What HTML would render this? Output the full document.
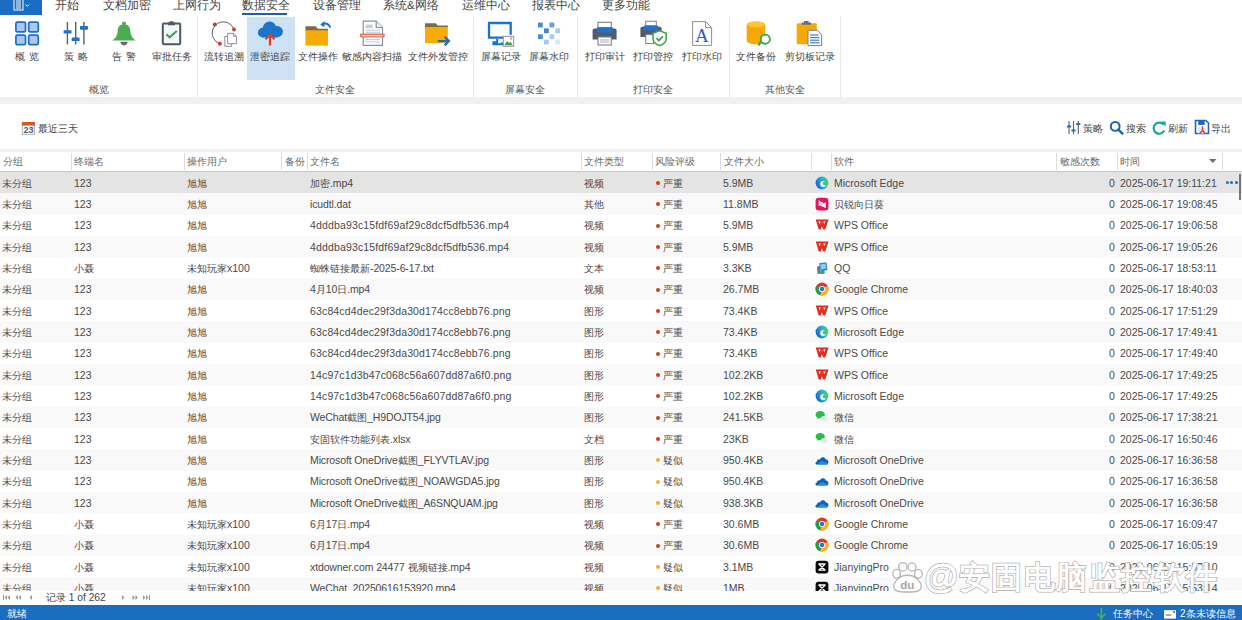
<!DOCTYPE html>
<html><head><meta charset="utf-8">
<style>
*{margin:0;padding:0;box-sizing:border-box}
html,body{width:1242px;height:620px;overflow:hidden;background:#fff;font-family:"Liberation Sans",sans-serif;color:#333;position:relative}
svg{display:block}
.a{position:absolute}
#appbtn{position:absolute;left:0;top:0;width:41.6px;height:14.6px;background:#1b6cc3}
.tab{position:absolute;top:-3px;font-size:11.5px;line-height:16px;color:#444;white-space:nowrap}
.sep{position:absolute;top:16px;width:1px;height:81px;background:#e6e6e6}
.lbl{position:absolute;top:51px;width:90px;margin-left:-45px;text-align:center;font-size:10.2px;line-height:12px;color:#444;white-space:nowrap}
.glbl{position:absolute;top:84px;width:90px;margin-left:-45px;text-align:center;font-size:10.2px;line-height:12px;color:#555;white-space:nowrap}
.ico{position:absolute}
#band{position:absolute;left:0;top:97px;width:1242px;height:7px;background:#f1f1f1}
#band2{position:absolute;left:0;top:149px;width:1242px;height:2.5px;background:#f1f1f1}
.tb{position:absolute;top:123px;font-size:10.4px;line-height:12px;color:#444;white-space:nowrap}
#hdr{position:absolute;left:0;top:151.5px;width:1242px;height:20.5px;background:#fff;border-bottom:1px solid #c9c9c9}
.h{position:absolute;top:4.3px;font-size:10.3px;line-height:12px;color:#6a6a6a;white-space:nowrap}
.hs{position:absolute;top:1.5px;width:1px;height:16.5px;background:#dcdcdc}
#grid{position:absolute;left:0;top:172px;width:1242px;height:419px;overflow:hidden}
.row{position:absolute;left:0;width:1242px;height:21.34px}
.c{position:absolute;top:0.7px;line-height:21.34px;font-size:10.5px;color:#4a4a4a;white-space:nowrap}
.fn{letter-spacing:.12px}
.k{font-size:9.6px;letter-spacing:0}
.dot{position:absolute;left:655.5px;top:9.1px;width:4px;height:4px;border-radius:50%}
.sw{position:absolute;left:814.5px;top:3.8px}
.more{position:absolute;left:1225.5px;top:9px}
.more i{display:inline-block;width:3.2px;height:3.2px;border-radius:50%;background:#1f6bc4;margin-right:1.6px;vertical-align:top}
#scroll{position:absolute;left:1239px;top:173.5px;width:1.6px;height:26px;background:#777}
#pager{position:absolute;left:0;top:591px;width:1242px;height:14px;background:#fff}
#status{position:absolute;left:0;top:605px;width:1242px;height:15px;background:#1b6dbf}
.st{position:absolute;top:3px;font-size:10px;line-height:12px;color:#fff;white-space:nowrap}
</style></head><body>
<!-- tab bar -->
<div id="appbtn"><svg width="42" height="14" viewBox="0 0 42 14"><rect x="14" y="-1" width="9" height="11" fill="none" stroke="#d9e7f7" stroke-width="1.2"/><rect x="16" y="0" width="5" height="9" fill="#8fb6e3"/><path d="M25.5 4.5 L27.3 6.3 L29.1 4.5" fill="none" stroke="#fff" stroke-width="1"/></svg></div>
<div class="tab" style="left:55px">开始</div>
<div class="tab" style="left:103px">文档加密</div>
<div class="tab" style="left:173px">上网行为</div>
<div class="tab" style="left:242px">数据安全</div>
<div class="a" style="left:242px;top:12.5px;width:45px;height:2px;background:#1d5fae"></div>
<div class="tab" style="left:313px">设备管理</div>
<div class="tab" style="left:383px">系统&amp;网络</div>
<div class="tab" style="left:462px">运维中心</div>
<div class="tab" style="left:532px">报表中心</div>
<div class="tab" style="left:602px">更多功能</div>

<!-- ribbon -->
<div class="a" style="left:246.5px;top:17px;width:48.5px;height:62.5px;background:#cde2f5"></div>
<div class="sep" style="left:197px"></div>
<div class="sep" style="left:473px"></div>
<div class="sep" style="left:577px"></div>
<div class="sep" style="left:729px"></div>
<div class="sep" style="left:840px"></div>

<svg class="ico" style="left:14px;top:20px" width="27" height="27" viewBox="0 0 27 27"><rect x="1.9" y="2.2" width="9.6" height="9.6" rx="1.4" fill="#a9c7ef" stroke="#1d6fc6" stroke-width="1.7"/><rect x="14.7" y="2.2" width="9.6" height="9.6" rx="1.4" fill="#a9c7ef" stroke="#1d6fc6" stroke-width="1.7"/><rect x="1.9" y="15.1" width="9.6" height="9.6" rx="1.4" fill="#a9c7ef" stroke="#1d6fc6" stroke-width="1.7"/><rect x="14.7" y="15.1" width="9.6" height="9.6" rx="1.4" fill="#a9c7ef" stroke="#1d6fc6" stroke-width="1.7"/></svg>
<svg class="ico" style="left:62px;top:21px" width="27" height="25" viewBox="0 0 27 25"><g stroke="#5a5f69" stroke-width="1.4"><line x1="5.4" y1="1" x2="5.4" y2="23.5"/><line x1="13.7" y1="1" x2="13.7" y2="23.5"/><line x1="21.9" y1="1" x2="21.9" y2="23.5"/></g><g fill="#1e72c8"><rect x="1.6" y="9.2" width="7.9" height="3.4" rx=".6"/><rect x="9.7" y="16.5" width="7.9" height="3.5" rx=".6"/><rect x="18" y="5" width="8" height="3.7" rx=".6"/></g></svg>
<svg class="ico" style="left:111px;top:20px" width="26" height="27" viewBox="0 0 26 27"><circle cx="13" cy="3.4" r="1.9" fill="#4bab4d"/><path d="M13 4.2C8.6 4.2 6.9 7 6.7 10.8 6.5 15.2 5 17.8 1.4 20.6H24.6C21 17.8 19.5 15.2 19.3 10.8 19.1 7 17.4 4.2 13 4.2Z" fill="#4bab4d"/><path d="M9.5 21.8H16.6C16.6 24 15 25.4 13 25.4 11.1 25.4 9.5 24 9.5 21.8Z" fill="#6f6288"/></svg>
<svg class="ico" style="left:160px;top:20px" width="24" height="27" viewBox="0 0 24 27"><rect x="2.8" y="3.6" width="17.4" height="20.6" rx="1" fill="#f4f7f9" stroke="#505663" stroke-width="2"/><path d="M8 5.2V2.6H9.8V1.2H13.2V2.6H15V5.2Z" fill="#505663"/><path d="M6.3 14.3L9.6 17.3 16.8 10.9" fill="none" stroke="#39a349" stroke-width="2"/></svg>
<svg class="ico" style="left:209px;top:19px" width="30" height="30" viewBox="0 0 30 30"><path d="M10.9 24.7A11.2 11.2 0 1 1 25 10.4" fill="none" stroke="#5b5f6a" stroke-width="1"/><circle cx="5.8" cy="5.6" r="2" fill="#b8432a"/><circle cx="25" cy="10.4" r="2" fill="#c04a2c"/><circle cx="10.9" cy="24.7" r="2" fill="#dd3444"/><path d="M15.8 17.5H22.6V27.3H15.8Z" fill="#fff" stroke="#8c8f98" stroke-width="1"/><path d="M18.6 14.3H24.4L27.4 17.3V24.7H18.6Z" fill="#fff" stroke="#8c8f98" stroke-width="1"/><path d="M24.4 14.3V17.3H27.4" fill="none" stroke="#8c8f98" stroke-width="1"/></svg>
<svg class="ico" style="left:257px;top:20px" width="27" height="27" viewBox="0 0 27 27"><g fill="#1b75c9"><circle cx="5.8" cy="12.6" r="4.9"/><circle cx="12.6" cy="8.6" r="7"/><circle cx="20.4" cy="11.6" r="5.5"/><rect x="5.8" y="10" width="15" height="7.5"/></g><path d="M13 13.2L7.6 18.4 9.2 19.9 11.9 17.3V25.6H14.1V17.3L16.8 19.9 18.4 18.4Z" fill="#d9432a"/></svg>
<svg class="ico" style="left:304px;top:19px" width="28" height="28" viewBox="0 0 28 28"><path d="M1.4 7.3H11.6L13.8 9.8H24V12H1.4Z" fill="#7d6a47"/><rect x="1.4" y="11.3" width="22.6" height="15.3" fill="#f7ac05"/><path d="M26.2 8.6C25.4 4.8 21.8 3.8 18.6 5.2" fill="none" stroke="#1b6fc8" stroke-width="2"/><path d="M16.2 5.4L20.6 2 20.2 8.2Z" fill="#1b6fc8"/></svg>
<svg class="ico" style="left:359px;top:20px" width="27" height="27" viewBox="0 0 27 27"><path d="M4.2 1.2H17.2L23.5 7.5V25.4H4.2Z" fill="#fff" stroke="#8b8f9d" stroke-width="1.2"/><path d="M17.2 1.2V7.5H23.5" fill="#eef0f4" stroke="#8b8f9d" stroke-width="1.2"/><rect x="6.6" y="4.6" width="7.2" height="3.6" fill="#c7ccd8"/><g fill="#cdd1db"><rect x="6.6" y="9.6" width="14.4" height="1.2"/><rect x="6.6" y="11.7" width="14.4" height="1.2"/><rect x="6.6" y="19" width="14.4" height="1.2"/><rect x="6.6" y="21.3" width="14.4" height="1.2"/></g><rect x="1" y="13.6" width="24.7" height="4" rx="1" fill="#e07b62"/><rect x="3.2" y="15" width="20.3" height="1.2" fill="#f7cfc2"/></svg>
<svg class="ico" style="left:424px;top:20px" width="27" height="27" viewBox="0 0 27 27"><path d="M1 3.2H11.8L13.8 5.4H23.8V7.6H1Z" fill="#7d6a47"/><rect x="1" y="7" width="22.8" height="16" fill="#f7ac05"/><path d="M13.8 21.1H24" fill="none" stroke="#1b6fc8" stroke-width="2.2"/><path d="M20.6 16.8L25 21.1 20.6 25.4" fill="none" stroke="#1b6fc8" stroke-width="2.2"/></svg>
<svg class="ico" style="left:486px;top:20px" width="29" height="28" viewBox="0 0 29 28"><path d="M17 17.6H3V3H24.7V14.8" fill="none" stroke="#1a72d0" stroke-width="2.3"/><path d="M11.2 18.7V22.3H7.4V24.2H16.2V22.3" fill="none" stroke="#1a72d0" stroke-width="2"/><rect x="17.3" y="16.3" width="10.4" height="10" fill="#fff" stroke="#a283b5" stroke-width="1"/><path d="M18.3 25.3L21.2 21 23.2 23 24.4 21.8 26.8 25.3Z" fill="#3da34b"/><circle cx="25" cy="18.6" r="1.3" fill="#f1b52e"/></svg>
<svg class="ico" style="left:536px;top:21px" width="26" height="26" viewBox="0 0 26 26"><rect x="2" y="1.6000000000000014" width="4.8" height="4.8" fill="#4a8ad1"/><rect x="13.5" y="1.6000000000000014" width="4.8" height="4.8" fill="#5f9de0"/><rect x="8" y="7.399999999999999" width="4.8" height="4.8" fill="#4185d0"/><rect x="19.299999999999955" y="7.399999999999999" width="4.8" height="4.8" fill="#a8cbef"/><rect x="2" y="13.299999999999997" width="4.8" height="4.8" fill="#4d8cd2"/><rect x="13.5" y="13.299999999999997" width="4.8" height="4.8" fill="#a9cbef"/><rect x="8" y="18.700000000000003" width="4.8" height="4.8" fill="#a7c9ee"/><rect x="19.299999999999955" y="18.700000000000003" width="4.8" height="4.8" fill="#d8e8f8"/></svg>
<svg class="ico" style="left:591px;top:21px" width="27" height="26" viewBox="0 0 27 26"><rect x="7" y="1.3" width="13.3" height="5.5" fill="#fff" stroke="#7b818d" stroke-width="1.1"/><path d="M1.6 9.5Q1.6 7.5 3.6 7.5H23.6Q25.6 7.5 25.6 9.5V18.5H1.6Z" fill="#535c6a"/><rect x="5.7" y="6.3" width="16.3" height="5.2" rx=".8" fill="#1c73d0"/><rect x="7" y="16" width="13.3" height="8" fill="#fff" stroke="#7b818d" stroke-width="1.1"/><g fill="#9aa0aa"><rect x="9" y="18.5" width="9.3" height=".9"/><rect x="9" y="20.6" width="9.3" height=".9"/></g></svg>
<svg class="ico" style="left:639px;top:20px" width="29" height="27" viewBox="0 0 29 27"><rect x="6.8" y="1.3" width="10.5" height="4.6" fill="#fff" stroke="#7b818d" stroke-width="1"/><path d="M1.4 8.6Q1.4 6.8 3.2 6.8H20.8Q22.6 6.8 22.6 8.6V17H1.4Z" fill="#535c6a"/><rect x="4.8" y="5.4" width="14.4" height="4.8" rx=".8" fill="#1c73d0"/><rect x="6.8" y="14.6" width="8" height="9" fill="#fff" stroke="#7b818d" stroke-width="1"/><path d="M20.6 10.8L27.2 13.2V18.5C27.2 22 24.4 24.4 20.6 25.6 16.8 24.4 14 22 14 18.5V13.2Z" fill="#fff" stroke="#3ea74b" stroke-width="1.6"/><path d="M17.4 18.2L19.8 20.6 23.9 16.2" fill="none" stroke="#3a8a46" stroke-width="1.5"/></svg>
<svg class="ico" style="left:691px;top:20px" width="23" height="27" viewBox="0 0 23 27"><path d="M1.6 1.6H14.6L20.6 7.6V25.4H1.6Z" fill="#fff" stroke="#8a8f99" stroke-width="1"/><path d="M14.6 1.6V7.6H20.6" fill="none" stroke="#8a8f99" stroke-width="1"/><text x="10.8" y="21.7" text-anchor="middle" font-family="Liberation Serif" font-size="19" fill="#2262b2">A</text></svg>
<svg class="ico" style="left:745px;top:20px" width="28" height="27" viewBox="0 0 28 27"><path d="M1.7 4.3V20.8C1.7 23 5.9 24.3 11 24.3 16.1 24.3 20.3 23 20.3 20.8V4.3Z" fill="#f6a902"/><ellipse cx="11" cy="4.3" rx="9.3" ry="3" fill="#ffc52e"/><path d="M15.3 22.6L13.9 24.6" stroke="#3ea74b" stroke-width="2.4" stroke-linecap="round"/><circle cx="20.3" cy="19.2" r="4.6" fill="#fff" stroke="#3ea74b" stroke-width="1.9"/></svg>
<svg class="ico" style="left:795px;top:20px" width="28" height="27" viewBox="0 0 28 27"><rect x="1.7" y="3.2" width="20.1" height="21" rx="1.2" fill="#f6a902"/><path d="M6.6 4.8V2.6H9V1H13.6V2.6H16V4.8Z" fill="#68707d"/><path d="M13 10.3H22.4L26.6 14.5V25.6H13Z" fill="#fff" stroke="#7b818d" stroke-width="1"/><g fill="#3b7fd2"><rect x="15" y="14.4" width="8.6" height="1.2"/><rect x="15" y="17" width="9.4" height="1.2"/><rect x="15" y="19.6" width="9.4" height="1.2"/><rect x="15" y="22.2" width="9.4" height="1.2"/></g></svg>

<div class="lbl" style="left:27px">概<i style="display:inline-block;width:4.5px"></i>览</div>
<div class="lbl" style="left:76px">策<i style="display:inline-block;width:4.5px"></i>略</div>
<div class="lbl" style="left:124px">告<i style="display:inline-block;width:4.5px"></i>警</div>
<div class="lbl" style="left:171.5px">审批任务</div>
<div class="lbl" style="left:224px">流转追溯</div>
<div class="lbl" style="left:270px">泄密追踪</div>
<div class="lbl" style="left:317.5px">文件操作</div>
<div class="lbl" style="left:372.4px">敏感内容扫描</div>
<div class="lbl" style="left:437.6px">文件外发管控</div>
<div class="lbl" style="left:500.6px">屏幕记录</div>
<div class="lbl" style="left:549px">屏幕水印</div>
<div class="lbl" style="left:604.6px">打印审计</div>
<div class="lbl" style="left:653px">打印管控</div>
<div class="lbl" style="left:702px">打印水印</div>
<div class="lbl" style="left:756.4px">文件备份</div>
<div class="lbl" style="left:809.5px">剪切板记录</div>

<div class="glbl" style="left:98.5px">概览</div>
<div class="glbl" style="left:335px">文件安全</div>
<div class="glbl" style="left:525px">屏幕安全</div>
<div class="glbl" style="left:653px">打印安全</div>
<div class="glbl" style="left:784.5px">其他安全</div>

<div id="band"></div>

<!-- toolbar -->
<svg class="ico" style="left:21px;top:120px" width="16" height="16" viewBox="0 0 16 16"><rect x="1.3" y="2.4" width="12.2" height="12" fill="#fff" stroke="#a9b0ba" stroke-width=".9"/><rect x="0.9" y="2" width="13" height="3.6" fill="#d8561f"/><text x="7.6" y="13.2" text-anchor="middle" font-family="Liberation Sans" font-size="9" font-weight="bold" fill="#4f5968">23</text></svg>
<svg class="ico" style="left:1066px;top:120px" width="16" height="15" viewBox="0 0 16 15"><g stroke="#5a5f69" stroke-width="1.1"><line x1="3" y1="1" x2="3" y2="14"/><line x1="7.5" y1="1" x2="7.5" y2="14"/><line x1="12.3" y1="1" x2="12.3" y2="14"/></g><g fill="#1e72c8"><rect x="1" y="5.5" width="4.2" height="2"/><rect x="5.4" y="9.5" width="4.2" height="2"/><rect x="10.2" y="3" width="4.2" height="2"/></g></svg>
<svg class="ico" style="left:1109px;top:120px" width="16" height="16" viewBox="0 0 16 16"><circle cx="6.2" cy="6.4" r="4.4" fill="none" stroke="#1a5fb4" stroke-width="2"/><path d="M9.4 9.6L13.4 13.6" stroke="#1a5fb4" stroke-width="2.4" stroke-linecap="round"/></svg>
<svg class="ico" style="left:1151px;top:120px" width="16" height="16" viewBox="0 0 16 16"><path d="M12.6 4.6A5.6 5.6 0 1 0 13.3 10.6" fill="none" stroke="#1aa59d" stroke-width="2.2"/><path d="M9.6 1.6H14.6V6.6Z" fill="#1aa59d"/></svg>
<svg class="ico" style="left:1194px;top:119px" width="16" height="16" viewBox="0 0 16 16"><path d="M1.5 1.5H12L14.5 4V14.5H1.5Z" fill="#fff" stroke="#1c66c2" stroke-width="1.6"/><rect x="4.2" y="1.5" width="6.4" height="4.4" fill="#1c66c2"/><rect x="4" y="8.5" width="8" height="6" fill="#dfe9f6"/><path d="M8.5 7.2V12.6M5.5 14.8L8.5 11.6 11.5 14.8" fill="none" stroke="#d63a3a" stroke-width="1.4"/></svg>
<div class="tb" style="left:37.5px">最近三天</div>
<div class="tb" style="left:1082.5px">策略</div>
<div class="tb" style="left:1125.5px">搜索</div>
<div class="tb" style="left:1168px">刷新</div>
<div class="tb" style="left:1211px">导出</div>
<div id="band2"></div>

<!-- header -->
<div id="hdr">
  <div class="h" style="left:3px">分组</div>
  <div class="hs" style="left:70.5px"></div>
  <div class="h" style="left:74px">终端名</div>
  <div class="hs" style="left:184px"></div>
  <div class="h" style="left:187px">操作用户</div>
  <div class="hs" style="left:281px"></div>
  <div class="h" style="left:285px">备份</div>
  <div class="hs" style="left:307px"></div>
  <div class="h" style="left:310px">文件名</div>
  <div class="hs" style="left:581px"></div>
  <div class="h" style="left:584px">文件类型</div>
  <div class="hs" style="left:652px"></div>
  <div class="h" style="left:655px">风险评级</div>
  <div class="hs" style="left:720px"></div>
  <div class="h" style="left:724px">文件大小</div>
  <div class="hs" style="left:810.5px"></div>
  <div class="hs" style="left:831px"></div>
  <div class="h" style="left:834px">软件</div>
  <div class="hs" style="left:1056px"></div>
  <div class="h" style="left:1060px">敏感次数</div>
  <div class="hs" style="left:1116.5px"></div>
  <div class="h" style="left:1120px">时间</div>
  <svg class="a" style="left:1209px;top:7.8px" width="7.5" height="4" viewBox="0 0 7.5 4"><path d="M0 0H7.5L3.75 4Z" fill="#707070"/></svg>
  <div class="hs" style="left:1222px"></div>
</div>

<div id="grid">
<div class="row" style="top:0.000px;background:#e4e4e4"><span class="c" style="left:2px"><span class="k">未分组</span></span><span class="c" style="left:74px">123</span><span class="c" style="left:187px"><span class="k">旭旭</span></span><span class="c" style="left:310px;letter-spacing:-0.12px"><span class="k">加密</span>.mp4</span><span class="c" style="left:584px"><span class="k">视频</span></span><span class="dot" style="background:#cf3d1c"></span><span class="c" style="left:663px"><span class="k">严重</span></span><span class="c" style="left:723px">5.9MB</span><span class="sw"><svg width="14" height="14" viewBox="0 0 14 14"><defs><linearGradient id="eg" x1="0" y1="0.6" x2="1" y2="0.35"><stop offset="0" stop-color="#1565cf"/><stop offset=".5" stop-color="#27a9e3"/><stop offset="1" stop-color="#4cd66a"/></linearGradient></defs><circle cx="7" cy="7" r="6.4" fill="url(#eg)"/><path d="M2.5 9.5A6.4 6.4 0 0 0 11.8 11.2 5 5 0 0 1 4 10Z" fill="#0b58a8" opacity=".7"/><circle cx="8.2" cy="8.1" r="3" fill="#eaf8ff"/><circle cx="9.9" cy="7.4" r="2.1" fill="#41c86c"/></svg></span><span class="c" style="left:834px">Microsoft Edge</span><span class="c" style="left:1109px">0</span><span class="c" style="left:1120px">2025-06-17 19:11:21</span><span class="more"><i></i><i></i><i></i></span></div>
<div class="row" style="top:21.333px;background:#f9f9f9"><span class="c" style="left:2px"><span class="k">未分组</span></span><span class="c" style="left:74px">123</span><span class="c" style="left:187px"><span class="k">旭旭</span></span><span class="c" style="left:310px;letter-spacing:-0.12px">icudtl.dat</span><span class="c" style="left:584px"><span class="k">其他</span></span><span class="dot" style="background:#cf3d1c"></span><span class="c" style="left:663px"><span class="k">严重</span></span><span class="c" style="left:723px">11.8MB</span><span class="sw"><svg width="14" height="14" viewBox="0 0 14 14"><rect x="0.6" y="0.8" width="12.8" height="12.6" rx="3.2" fill="#e5135a"/><path d="M3.6 3.3L9 6.2 6.5 7.4 3.6 9Z" fill="#fde6ef"/><path d="M10.8 5.2V10.9L4.8 8.6 7.4 7.2Z" fill="#fff"/></svg></span><span class="c" style="left:834px"><span class="k">贝锐向日葵</span></span><span class="c" style="left:1109px">0</span><span class="c" style="left:1120px">2025-06-17 19:08:45</span></div>
<div class="row" style="top:42.667px;background:#ffffff"><span class="c" style="left:2px"><span class="k">未分组</span></span><span class="c" style="left:74px">123</span><span class="c" style="left:187px"><span class="k">旭旭</span></span><span class="c" style="left:310px;letter-spacing:0.15px">4dddba93c15fdf69af29c8dcf5dfb536.mp4</span><span class="c" style="left:584px"><span class="k">视频</span></span><span class="dot" style="background:#cf3d1c"></span><span class="c" style="left:663px"><span class="k">严重</span></span><span class="c" style="left:723px">5.9MB</span><span class="sw"><svg width="14" height="14" viewBox="0 0 14 14"><path d="M0.7 1.4H13.6L10.2 11.4H8.1L6.9 7.9 5.7 11.4H3.7Z" fill="#df2d24"/><path d="M3.5 3.3H5.6L4.7 6.6Z" fill="#fff"/><path d="M8.3 3.3H10.6L9.3 6.6Z" fill="#fde2d6"/><path d="M6.9 3.6L7.8 5.6 6 5.6Z" fill="#f46a3c"/></svg></span><span class="c" style="left:834px">WPS Office</span><span class="c" style="left:1109px">0</span><span class="c" style="left:1120px">2025-06-17 19:06:58</span></div>
<div class="row" style="top:64.000px;background:#f9f9f9"><span class="c" style="left:2px"><span class="k">未分组</span></span><span class="c" style="left:74px">123</span><span class="c" style="left:187px"><span class="k">旭旭</span></span><span class="c" style="left:310px;letter-spacing:0.15px">4dddba93c15fdf69af29c8dcf5dfb536.mp4</span><span class="c" style="left:584px"><span class="k">视频</span></span><span class="dot" style="background:#cf3d1c"></span><span class="c" style="left:663px"><span class="k">严重</span></span><span class="c" style="left:723px">5.9MB</span><span class="sw"><svg width="14" height="14" viewBox="0 0 14 14"><path d="M0.7 1.4H13.6L10.2 11.4H8.1L6.9 7.9 5.7 11.4H3.7Z" fill="#df2d24"/><path d="M3.5 3.3H5.6L4.7 6.6Z" fill="#fff"/><path d="M8.3 3.3H10.6L9.3 6.6Z" fill="#fde2d6"/><path d="M6.9 3.6L7.8 5.6 6 5.6Z" fill="#f46a3c"/></svg></span><span class="c" style="left:834px">WPS Office</span><span class="c" style="left:1109px">0</span><span class="c" style="left:1120px">2025-06-17 19:05:26</span></div>
<div class="row" style="top:85.333px;background:#ffffff"><span class="c" style="left:2px"><span class="k">未分组</span></span><span class="c" style="left:74px"><span class="k">小聂</span></span><span class="c" style="left:187px"><span class="k">未知玩家</span>x100</span><span class="c" style="left:310px;letter-spacing:-0.12px"><span class="k">蜘蛛链接最新</span>-2025-6-17.txt</span><span class="c" style="left:584px"><span class="k">文本</span></span><span class="dot" style="background:#cf3d1c"></span><span class="c" style="left:663px"><span class="k">严重</span></span><span class="c" style="left:723px">3.3KB</span><span class="sw"><svg width="14" height="14" viewBox="0 0 14 14"><path d="M4 2.2L11.5 1.2 12.4 9 6 10.6Z" fill="#2f7fcf"/><path d="M5.2 3.4L10.6 2.6 11.2 7.6 6.3 8.6Z" fill="#7fd3f5"/><path d="M2 5.5L5 5 5.8 12.6 2.6 13Z" fill="#6b747c"/><path d="M5 10.5L9.5 9.6 9.8 12.8 5.5 13.3Z" fill="#3aa66a"/></svg></span><span class="c" style="left:834px">QQ</span><span class="c" style="left:1109px">0</span><span class="c" style="left:1120px">2025-06-17 18:53:11</span></div>
<div class="row" style="top:106.667px;background:#f9f9f9"><span class="c" style="left:2px"><span class="k">未分组</span></span><span class="c" style="left:74px">123</span><span class="c" style="left:187px"><span class="k">旭旭</span></span><span class="c" style="left:310px;letter-spacing:-0.12px">4<span class="k">月</span>10<span class="k">日</span>.mp4</span><span class="c" style="left:584px"><span class="k">视频</span></span><span class="dot" style="background:#cf3d1c"></span><span class="c" style="left:663px"><span class="k">严重</span></span><span class="c" style="left:723px">26.7MB</span><span class="sw"><svg width="14" height="14" viewBox="0 0 14 14"><circle cx="7" cy="7" r="6.5" fill="#db3a2f"/><path d="M7 7L1.4 3.8A6.5 6.5 0 0 0 5.2 13.2Z" fill="#1e9e48"/><path d="M7 7L5.2 13.2A6.5 6.5 0 0 0 13.5 7 6.5 6.5 0 0 0 12.6 3.8Z" fill="#f6bb13"/><circle cx="7" cy="7" r="3.1" fill="#fff"/><circle cx="7" cy="7" r="2.3" fill="#2b6ee8"/></svg></span><span class="c" style="left:834px">Google Chrome</span><span class="c" style="left:1109px">0</span><span class="c" style="left:1120px">2025-06-17 18:40:03</span></div>
<div class="row" style="top:128.000px;background:#ffffff"><span class="c" style="left:2px"><span class="k">未分组</span></span><span class="c" style="left:74px">123</span><span class="c" style="left:187px"><span class="k">旭旭</span></span><span class="c" style="left:310px;letter-spacing:0.15px">63c84cd4dec29f3da30d174cc8ebb76.png</span><span class="c" style="left:584px"><span class="k">图形</span></span><span class="dot" style="background:#cf3d1c"></span><span class="c" style="left:663px"><span class="k">严重</span></span><span class="c" style="left:723px">73.4KB</span><span class="sw"><svg width="14" height="14" viewBox="0 0 14 14"><path d="M0.7 1.4H13.6L10.2 11.4H8.1L6.9 7.9 5.7 11.4H3.7Z" fill="#df2d24"/><path d="M3.5 3.3H5.6L4.7 6.6Z" fill="#fff"/><path d="M8.3 3.3H10.6L9.3 6.6Z" fill="#fde2d6"/><path d="M6.9 3.6L7.8 5.6 6 5.6Z" fill="#f46a3c"/></svg></span><span class="c" style="left:834px">WPS Office</span><span class="c" style="left:1109px">0</span><span class="c" style="left:1120px">2025-06-17 17:51:29</span></div>
<div class="row" style="top:149.333px;background:#f9f9f9"><span class="c" style="left:2px"><span class="k">未分组</span></span><span class="c" style="left:74px">123</span><span class="c" style="left:187px"><span class="k">旭旭</span></span><span class="c" style="left:310px;letter-spacing:0.15px">63c84cd4dec29f3da30d174cc8ebb76.png</span><span class="c" style="left:584px"><span class="k">图形</span></span><span class="dot" style="background:#cf3d1c"></span><span class="c" style="left:663px"><span class="k">严重</span></span><span class="c" style="left:723px">73.4KB</span><span class="sw"><svg width="14" height="14" viewBox="0 0 14 14"><defs><linearGradient id="eg" x1="0" y1="0.6" x2="1" y2="0.35"><stop offset="0" stop-color="#1565cf"/><stop offset=".5" stop-color="#27a9e3"/><stop offset="1" stop-color="#4cd66a"/></linearGradient></defs><circle cx="7" cy="7" r="6.4" fill="url(#eg)"/><path d="M2.5 9.5A6.4 6.4 0 0 0 11.8 11.2 5 5 0 0 1 4 10Z" fill="#0b58a8" opacity=".7"/><circle cx="8.2" cy="8.1" r="3" fill="#eaf8ff"/><circle cx="9.9" cy="7.4" r="2.1" fill="#41c86c"/></svg></span><span class="c" style="left:834px">Microsoft Edge</span><span class="c" style="left:1109px">0</span><span class="c" style="left:1120px">2025-06-17 17:49:41</span></div>
<div class="row" style="top:170.667px;background:#ffffff"><span class="c" style="left:2px"><span class="k">未分组</span></span><span class="c" style="left:74px">123</span><span class="c" style="left:187px"><span class="k">旭旭</span></span><span class="c" style="left:310px;letter-spacing:0.15px">63c84cd4dec29f3da30d174cc8ebb76.png</span><span class="c" style="left:584px"><span class="k">图形</span></span><span class="dot" style="background:#cf3d1c"></span><span class="c" style="left:663px"><span class="k">严重</span></span><span class="c" style="left:723px">73.4KB</span><span class="sw"><svg width="14" height="14" viewBox="0 0 14 14"><path d="M0.7 1.4H13.6L10.2 11.4H8.1L6.9 7.9 5.7 11.4H3.7Z" fill="#df2d24"/><path d="M3.5 3.3H5.6L4.7 6.6Z" fill="#fff"/><path d="M8.3 3.3H10.6L9.3 6.6Z" fill="#fde2d6"/><path d="M6.9 3.6L7.8 5.6 6 5.6Z" fill="#f46a3c"/></svg></span><span class="c" style="left:834px">WPS Office</span><span class="c" style="left:1109px">0</span><span class="c" style="left:1120px">2025-06-17 17:49:40</span></div>
<div class="row" style="top:192.000px;background:#f9f9f9"><span class="c" style="left:2px"><span class="k">未分组</span></span><span class="c" style="left:74px">123</span><span class="c" style="left:187px"><span class="k">旭旭</span></span><span class="c" style="left:310px;letter-spacing:0.15px">14c97c1d3b47c068c56a607dd87a6f0.png</span><span class="c" style="left:584px"><span class="k">图形</span></span><span class="dot" style="background:#cf3d1c"></span><span class="c" style="left:663px"><span class="k">严重</span></span><span class="c" style="left:723px">102.2KB</span><span class="sw"><svg width="14" height="14" viewBox="0 0 14 14"><path d="M0.7 1.4H13.6L10.2 11.4H8.1L6.9 7.9 5.7 11.4H3.7Z" fill="#df2d24"/><path d="M3.5 3.3H5.6L4.7 6.6Z" fill="#fff"/><path d="M8.3 3.3H10.6L9.3 6.6Z" fill="#fde2d6"/><path d="M6.9 3.6L7.8 5.6 6 5.6Z" fill="#f46a3c"/></svg></span><span class="c" style="left:834px">WPS Office</span><span class="c" style="left:1109px">0</span><span class="c" style="left:1120px">2025-06-17 17:49:25</span></div>
<div class="row" style="top:213.333px;background:#ffffff"><span class="c" style="left:2px"><span class="k">未分组</span></span><span class="c" style="left:74px">123</span><span class="c" style="left:187px"><span class="k">旭旭</span></span><span class="c" style="left:310px;letter-spacing:0.15px">14c97c1d3b47c068c56a607dd87a6f0.png</span><span class="c" style="left:584px"><span class="k">图形</span></span><span class="dot" style="background:#cf3d1c"></span><span class="c" style="left:663px"><span class="k">严重</span></span><span class="c" style="left:723px">102.2KB</span><span class="sw"><svg width="14" height="14" viewBox="0 0 14 14"><defs><linearGradient id="eg" x1="0" y1="0.6" x2="1" y2="0.35"><stop offset="0" stop-color="#1565cf"/><stop offset=".5" stop-color="#27a9e3"/><stop offset="1" stop-color="#4cd66a"/></linearGradient></defs><circle cx="7" cy="7" r="6.4" fill="url(#eg)"/><path d="M2.5 9.5A6.4 6.4 0 0 0 11.8 11.2 5 5 0 0 1 4 10Z" fill="#0b58a8" opacity=".7"/><circle cx="8.2" cy="8.1" r="3" fill="#eaf8ff"/><circle cx="9.9" cy="7.4" r="2.1" fill="#41c86c"/></svg></span><span class="c" style="left:834px">Microsoft Edge</span><span class="c" style="left:1109px">0</span><span class="c" style="left:1120px">2025-06-17 17:49:25</span></div>
<div class="row" style="top:234.667px;background:#f9f9f9"><span class="c" style="left:2px"><span class="k">未分组</span></span><span class="c" style="left:74px">123</span><span class="c" style="left:187px"><span class="k">旭旭</span></span><span class="c" style="left:310px;letter-spacing:-0.12px">WeChat<span class="k">截图</span>_H9DOJT54.jpg</span><span class="c" style="left:584px"><span class="k">图形</span></span><span class="dot" style="background:#cf3d1c"></span><span class="c" style="left:663px"><span class="k">严重</span></span><span class="c" style="left:723px">241.5KB</span><span class="sw"><svg width="14" height="14" viewBox="0 0 14 14"><ellipse cx="5.2" cy="4.6" rx="4.6" ry="3.6" fill="#22c04a"/><path d="M2.2 7.2L2.4 9 4.2 7.8Z" fill="#22c04a"/><ellipse cx="9.2" cy="8.6" rx="3.4" ry="2.6" fill="#ece6ea"/></svg></span><span class="c" style="left:834px"><span class="k">微信</span></span><span class="c" style="left:1109px">0</span><span class="c" style="left:1120px">2025-06-17 17:38:21</span></div>
<div class="row" style="top:256.000px;background:#ffffff"><span class="c" style="left:2px"><span class="k">未分组</span></span><span class="c" style="left:74px">123</span><span class="c" style="left:187px"><span class="k">旭旭</span></span><span class="c" style="left:310px;letter-spacing:-0.12px"><span class="k">安固软件功能列表</span>.xlsx</span><span class="c" style="left:584px"><span class="k">文档</span></span><span class="dot" style="background:#cf3d1c"></span><span class="c" style="left:663px"><span class="k">严重</span></span><span class="c" style="left:723px">23KB</span><span class="sw"><svg width="14" height="14" viewBox="0 0 14 14"><ellipse cx="5.2" cy="4.6" rx="4.6" ry="3.6" fill="#22c04a"/><path d="M2.2 7.2L2.4 9 4.2 7.8Z" fill="#22c04a"/><ellipse cx="9.2" cy="8.6" rx="3.4" ry="2.6" fill="#ece6ea"/></svg></span><span class="c" style="left:834px"><span class="k">微信</span></span><span class="c" style="left:1109px">0</span><span class="c" style="left:1120px">2025-06-17 16:50:46</span></div>
<div class="row" style="top:277.333px;background:#f9f9f9"><span class="c" style="left:2px"><span class="k">未分组</span></span><span class="c" style="left:74px">123</span><span class="c" style="left:187px"><span class="k">旭旭</span></span><span class="c" style="left:310px;letter-spacing:-0.12px">Microsoft OneDrive<span class="k">截图</span>_FLYVTLAV.jpg</span><span class="c" style="left:584px"><span class="k">图形</span></span><span class="dot" style="background:#f2b126"></span><span class="c" style="left:663px"><span class="k">疑似</span></span><span class="c" style="left:723px">950.4KB</span><span class="sw"><svg width="14" height="14" viewBox="0 0 14 14"><path d="M1.8 11.5C0.2 11.5 0 8.8 1.9 8.4 2.2 6.6 3.7 6 4.9 6.4 6 3.8 9.6 3.6 10.9 6.4 13 6.4 14 8.6 13.2 10.2 12.8 11 12 11.5 11.2 11.5Z" fill="#0e63b8"/><path d="M4 11.5C3 11.5 3.2 9.6 4.6 9.4 5.6 7.8 8.8 7.6 10 9.6 12 9.4 13 10.8 12.2 11.5Z" fill="#2a8ae0"/></svg></span><span class="c" style="left:834px">Microsoft OneDrive</span><span class="c" style="left:1109px">0</span><span class="c" style="left:1120px">2025-06-17 16:36:58</span></div>
<div class="row" style="top:298.667px;background:#ffffff"><span class="c" style="left:2px"><span class="k">未分组</span></span><span class="c" style="left:74px">123</span><span class="c" style="left:187px"><span class="k">旭旭</span></span><span class="c" style="left:310px;letter-spacing:-0.12px">Microsoft OneDrive<span class="k">截图</span>_NOAWGDA5.jpg</span><span class="c" style="left:584px"><span class="k">图形</span></span><span class="dot" style="background:#f2b126"></span><span class="c" style="left:663px"><span class="k">疑似</span></span><span class="c" style="left:723px">950.4KB</span><span class="sw"><svg width="14" height="14" viewBox="0 0 14 14"><path d="M1.8 11.5C0.2 11.5 0 8.8 1.9 8.4 2.2 6.6 3.7 6 4.9 6.4 6 3.8 9.6 3.6 10.9 6.4 13 6.4 14 8.6 13.2 10.2 12.8 11 12 11.5 11.2 11.5Z" fill="#0e63b8"/><path d="M4 11.5C3 11.5 3.2 9.6 4.6 9.4 5.6 7.8 8.8 7.6 10 9.6 12 9.4 13 10.8 12.2 11.5Z" fill="#2a8ae0"/></svg></span><span class="c" style="left:834px">Microsoft OneDrive</span><span class="c" style="left:1109px">0</span><span class="c" style="left:1120px">2025-06-17 16:36:58</span></div>
<div class="row" style="top:320.000px;background:#f9f9f9"><span class="c" style="left:2px"><span class="k">未分组</span></span><span class="c" style="left:74px">123</span><span class="c" style="left:187px"><span class="k">旭旭</span></span><span class="c" style="left:310px;letter-spacing:-0.12px">Microsoft OneDrive<span class="k">截图</span>_A6SNQUAM.jpg</span><span class="c" style="left:584px"><span class="k">图形</span></span><span class="dot" style="background:#f2b126"></span><span class="c" style="left:663px"><span class="k">疑似</span></span><span class="c" style="left:723px">938.3KB</span><span class="sw"><svg width="14" height="14" viewBox="0 0 14 14"><path d="M1.8 11.5C0.2 11.5 0 8.8 1.9 8.4 2.2 6.6 3.7 6 4.9 6.4 6 3.8 9.6 3.6 10.9 6.4 13 6.4 14 8.6 13.2 10.2 12.8 11 12 11.5 11.2 11.5Z" fill="#0e63b8"/><path d="M4 11.5C3 11.5 3.2 9.6 4.6 9.4 5.6 7.8 8.8 7.6 10 9.6 12 9.4 13 10.8 12.2 11.5Z" fill="#2a8ae0"/></svg></span><span class="c" style="left:834px">Microsoft OneDrive</span><span class="c" style="left:1109px">0</span><span class="c" style="left:1120px">2025-06-17 16:36:58</span></div>
<div class="row" style="top:341.333px;background:#ffffff"><span class="c" style="left:2px"><span class="k">未分组</span></span><span class="c" style="left:74px"><span class="k">小聂</span></span><span class="c" style="left:187px"><span class="k">未知玩家</span>x100</span><span class="c" style="left:310px;letter-spacing:-0.12px">6<span class="k">月</span>17<span class="k">日</span>.mp4</span><span class="c" style="left:584px"><span class="k">视频</span></span><span class="dot" style="background:#cf3d1c"></span><span class="c" style="left:663px"><span class="k">严重</span></span><span class="c" style="left:723px">30.6MB</span><span class="sw"><svg width="14" height="14" viewBox="0 0 14 14"><circle cx="7" cy="7" r="6.5" fill="#db3a2f"/><path d="M7 7L1.4 3.8A6.5 6.5 0 0 0 5.2 13.2Z" fill="#1e9e48"/><path d="M7 7L5.2 13.2A6.5 6.5 0 0 0 13.5 7 6.5 6.5 0 0 0 12.6 3.8Z" fill="#f6bb13"/><circle cx="7" cy="7" r="3.1" fill="#fff"/><circle cx="7" cy="7" r="2.3" fill="#2b6ee8"/></svg></span><span class="c" style="left:834px">Google Chrome</span><span class="c" style="left:1109px">0</span><span class="c" style="left:1120px">2025-06-17 16:09:47</span></div>
<div class="row" style="top:362.667px;background:#f9f9f9"><span class="c" style="left:2px"><span class="k">未分组</span></span><span class="c" style="left:74px"><span class="k">小聂</span></span><span class="c" style="left:187px"><span class="k">未知玩家</span>x100</span><span class="c" style="left:310px;letter-spacing:-0.12px">6<span class="k">月</span>17<span class="k">日</span>.mp4</span><span class="c" style="left:584px"><span class="k">视频</span></span><span class="dot" style="background:#cf3d1c"></span><span class="c" style="left:663px"><span class="k">严重</span></span><span class="c" style="left:723px">30.6MB</span><span class="sw"><svg width="14" height="14" viewBox="0 0 14 14"><circle cx="7" cy="7" r="6.5" fill="#db3a2f"/><path d="M7 7L1.4 3.8A6.5 6.5 0 0 0 5.2 13.2Z" fill="#1e9e48"/><path d="M7 7L5.2 13.2A6.5 6.5 0 0 0 13.5 7 6.5 6.5 0 0 0 12.6 3.8Z" fill="#f6bb13"/><circle cx="7" cy="7" r="3.1" fill="#fff"/><circle cx="7" cy="7" r="2.3" fill="#2b6ee8"/></svg></span><span class="c" style="left:834px">Google Chrome</span><span class="c" style="left:1109px">0</span><span class="c" style="left:1120px">2025-06-17 16:05:19</span></div>
<div class="row" style="top:384.000px;background:#ffffff"><span class="c" style="left:2px"><span class="k">未分组</span></span><span class="c" style="left:74px"><span class="k">小聂</span></span><span class="c" style="left:187px"><span class="k">未知玩家</span>x100</span><span class="c" style="left:310px;letter-spacing:-0.12px">xtdowner.com 24477 <span class="k">视频链接</span>.mp4</span><span class="c" style="left:584px"><span class="k">视频</span></span><span class="dot" style="background:#f2b126"></span><span class="c" style="left:663px"><span class="k">疑似</span></span><span class="c" style="left:723px">3.1MB</span><span class="sw"><svg width="14" height="14" viewBox="0 0 14 14"><rect x="0.6" y="0.8" width="12.8" height="12.6" rx="3" fill="#0a0a0a"/><path d="M3.4 4H10.6M3.4 10.2H10.6M4 4.3L10 9.9M10 4.3L4 9.9" fill="none" stroke="#fff" stroke-width="1.3"/></svg></span><span class="c" style="left:834px">JianyingPro</span><span class="c" style="left:1109px">0</span><span class="c" style="left:1120px">2025-06-17 15:57:10</span></div>
<div class="row" style="top:405.333px;background:#f9f9f9"><span class="c" style="left:2px"><span class="k">未分组</span></span><span class="c" style="left:74px"><span class="k">小聂</span></span><span class="c" style="left:187px"><span class="k">未知玩家</span>x100</span><span class="c" style="left:310px;letter-spacing:-0.12px">WeChat_20250616153920.mp4</span><span class="c" style="left:584px"><span class="k">视频</span></span><span class="dot" style="background:#f2b126"></span><span class="c" style="left:663px"><span class="k">疑似</span></span><span class="c" style="left:723px">1MB</span><span class="sw"><svg width="14" height="14" viewBox="0 0 14 14"><rect x="0.6" y="0.8" width="12.8" height="12.6" rx="3" fill="#0a0a0a"/><path d="M3.4 4H10.6M3.4 10.2H10.6M4 4.3L10 9.9M10 4.3L4 9.9" fill="none" stroke="#fff" stroke-width="1.3"/></svg></span><span class="c" style="left:834px">JianyingPro</span><span class="c" style="left:1109px">0</span><span class="c" style="left:1120px">2025-06-17 15:53:14</span></div>
</div>
<div id="scroll"></div>

<!-- pager -->
<div id="pager">
<svg class="a" style="left:0;top:0" width="160" height="14" viewBox="0 0 160 14"><g fill="#9a9a9a"><rect x="3" y="4" width="1" height="5"/><path d="M4.5 6.5L7 4V9Z"/><path d="M7.5 6.5L10 4V9Z"/><path d="M15.5 6.5L18 4V9Z"/><path d="M18.5 6.5L21 4V9Z"/><path d="M29.5 6.5L32 4V9Z"/><path d="M124.5 6.5L122 4V9Z"/><path d="M135 6.5L132.5 4V9Z"/><path d="M138 6.5L135.5 4V9Z"/><path d="M145.5 6.5L143 4V9Z"/><path d="M148.5 6.5L146 4V9Z"/><rect x="149" y="4" width="1" height="5"/></g></svg><div class="a" style="left:46px;top:0;font-size:10.2px;line-height:13px;color:#444;white-space:nowrap"><span style="font-size:9.6px">记录</span> 1 of 262</div>
</div>

<!-- status -->
<div id="status">
  <div class="st" style="left:7px">就绪</div>
  <svg class="a" style="left:1095px;top:2px" width="13" height="13" viewBox="0 0 13 13"><path d="M6.4 1V13" stroke="#4cae5a" stroke-width="1.8"/><path d="M2.2 6.6L6.4 10.6 10.6 6.6" fill="none" stroke="#4cae5a" stroke-width="1.6"/></svg><svg class="a" style="left:1164px;top:4.6px" width="12" height="9" viewBox="0 0 12 9"><rect x="0" y="0.2" width="12" height="8.4" fill="#fff"/><rect x="1.6" y="4.4" width="5.6" height="1.2" fill="#9a6d4e"/><path d="M8.4 1.2H10.8V3.4Z" fill="#444"/></svg>
  <div class="st" style="left:1112.5px">任务中心</div>
  <div class="st" style="left:1180px">2条未读信息</div>
</div>
<svg class="a" style="left:885px;top:552px" width="45" height="45" viewBox="0 0 45 45"><g fill="#fff" fill-opacity=".92" stroke="#b5b5b5" stroke-width="1.3"><ellipse cx="17.8" cy="14.9" rx="4.2" ry="4.2"/><ellipse cx="26.9" cy="15" rx="4" ry="4.1"/><ellipse cx="11.6" cy="21.8" rx="3.8" ry="4.4"/><ellipse cx="33.4" cy="21.8" rx="3.8" ry="4.4"/><path d="M9.2 36.8C7.6 33.6 10.4 29 14.2 25.8 18 22.4 27 22.4 30.8 25.8 34.6 29 37.4 33.6 35.8 36.8 34.2 39.8 30 40 22.5 40 15 40 10.8 39.8 9.2 36.8Z"/></g><text x="22.2" y="36.6" text-anchor="middle" font-family="Liberation Sans" font-size="11.5" font-weight="bold" fill="#a5a5a5">du</text></svg><div class="a" style="left:924px;top:556px;font-size:31px;line-height:40px;color:#fff;-webkit-text-stroke:2.3px #b0b0b0;white-space:nowrap;letter-spacing:1.5px"><span style="font-size:34px;letter-spacing:0">@</span>安固电脑监控软件</div><div class="a" style="left:924px;top:556px;font-size:31px;line-height:40px;color:#fff;-webkit-text-stroke:0.9px #fff;white-space:nowrap;letter-spacing:1.5px"><span style="font-size:34px;letter-spacing:0">@</span>安固电脑监控软件</div>
</body></html>
